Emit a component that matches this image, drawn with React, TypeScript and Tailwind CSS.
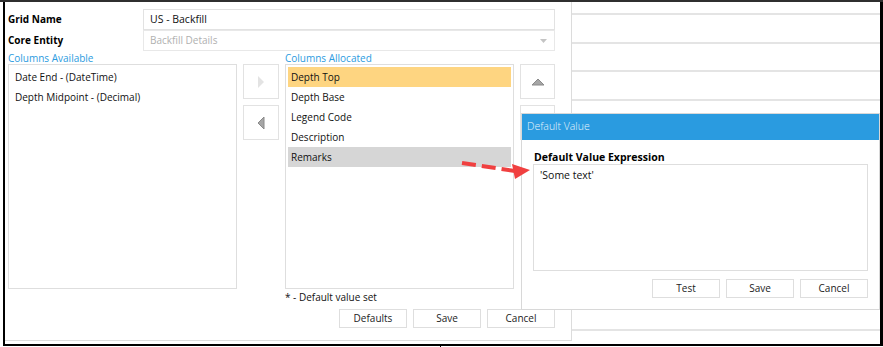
import React from 'react';

const font = "font-['Open_Sans',sans-serif]";

const leftItems = ['Date End - (DateTime)', 'Depth Midpoint - (Decimal)'];
const rightItems = [
  { label: 'Depth Top', tone: 'orange' },
  { label: 'Depth Base', tone: '' },
  { label: 'Legend Code', tone: '' },
  { label: 'Description', tone: '' },
  { label: 'Remarks', tone: 'gray' },
];

const FlatButton: React.FC<{ label: string }> = ({ label }) => (
  <div className="w-[68px] h-[19px] border border-[#dedede] bg-white flex items-center justify-center text-[10px] text-[#222]">
    {label}
  </div>
);

const ArrowBox: React.FC<{ children: React.ReactNode }> = ({ children }) => (
  <div className="w-full h-[35px] border border-[#e2e2e2] bg-white flex items-center justify-center">
    {children}
  </div>
);

export default function App() {
  return (
    <div className={`w-[883px] h-[347px] bg-white relative overflow-hidden ${font}`}>
      <div className="h-[2px] bg-[#2f2f2f]" />
      <div className="ml-[3px] w-[880px] h-[344px] border-l-2 border-r-[3px] border-b-2 border-black flex">
        {/* grid editor dialog */}
        <div className="w-[567px] h-[339px] shrink-0 border-r border-b border-[#dcdcdc] bg-white pl-[3px] pt-[7px]">
          <div className="w-[547px]">
            <div className="flex items-center h-[21px]">
              <div className="w-[135px] text-[10px] font-bold text-black">Grid Name</div>
              <div className="w-[412px] h-[21px] border border-[#e2e2e2] flex items-center px-[6px] text-[10.5px] text-[#111]">
                US - Backfill
              </div>
            </div>
            <div className="flex items-center h-[21px]">
              <div className="w-[135px] text-[10px] font-bold text-black">Core Entity</div>
              <div className="w-[412px] h-[21px] border border-[#e8e8e8] flex items-center justify-between px-[6px] text-[10px] text-[#b0b0b0]">
                <span>Backfill Details</span>
                <svg width="7" height="4" viewBox="0 0 7 4" className="mr-[1px]">
                  <path d="M0 0 L7 0 L3.5 4 Z" fill="#c4c4c4" />
                </svg>
              </div>
            </div>

            <div className="grid grid-cols-[229px_36px_229px_35px] gap-x-[6px]">
              <div className="h-[13px] leading-[14px] text-[10px] text-[#2b9be0]">Columns Available</div>
              <div />
              <div className="h-[13px] leading-[14px] text-[10px] text-[#2b9be0]">Columns Allocated</div>
              <div />

              <div className="h-[225px] border border-[#dedede] p-[2px]">
                {leftItems.map((t) => (
                  <div key={t} className="h-[20px] flex items-center pl-[4px] text-[10px] text-[#111]">
                    {t}
                  </div>
                ))}
              </div>

              <div className="flex flex-col gap-[6px]">
                <ArrowBox>
                  <svg width="8" height="14" viewBox="0 0 8 14">
                    <path d="M1 1 L7 7 L1 13 Z" fill="#e3e3e3" />
                  </svg>
                </ArrowBox>
                <ArrowBox>
                  <svg width="8" height="14" viewBox="0 0 8 14">
                    <path d="M7 1 L1 7 L7 13 Z" fill="#a6a6a6" stroke="#8a8a8a" strokeWidth="1" strokeLinejoin="round" />
                  </svg>
                </ArrowBox>
              </div>

              <div className="h-[225px] border border-[#dedede] p-[2px]">
                {rightItems.map((it) => (
                  <div
                    key={it.label}
                    className={`h-[20px] flex items-center pl-[3px] text-[10px] text-[#111] ${
                      it.tone === 'orange' ? 'bg-[#fed581]' : it.tone === 'gray' ? 'bg-[#d6d6d6]' : ''
                    }`}
                  >
                    {it.label}
                  </div>
                ))}
              </div>

              <div className="flex flex-col gap-[6px]">
                <ArrowBox>
                  <svg width="14" height="8" viewBox="0 0 14 8">
                    <path d="M1 7 L7 1 L13 7 Z" fill="#a6a6a6" stroke="#8a8a8a" strokeWidth="1" strokeLinejoin="round" />
                  </svg>
                </ArrowBox>
                <ArrowBox>
                  <svg width="14" height="8" viewBox="0 0 14 8">
                    <path d="M1 1 L7 7 L13 1 Z" fill="#a6a6a6" />
                  </svg>
                </ArrowBox>
              </div>
            </div>

            <div className="ml-[277px] h-[16px] leading-[16px] text-[10px] text-[#111]">* - Default value set</div>
            <div className="mt-[4px] flex justify-end gap-[6px]">
              <FlatButton label="Defaults" />
              <FlatButton label="Save" />
              <FlatButton label="Cancel" />
            </div>
          </div>
        </div>

        {/* background grid rows */}
        <div className="flex-1 flex flex-col">
          <div className="h-[13px] shrink-0 border-b-2 border-[#e4e4e4]" />
          {Array.from({ length: 11 }).map((_, i) => (
            <div key={i} className="h-[28.7px] shrink-0 border-b-2 border-[#e4e4e4]" />
          ))}
        </div>
      </div>

      {/* default value dialog */}
      <div className="absolute left-[521px] top-[113px] w-[359px] h-[197px] bg-white border border-[#d8d8d8]">
        <div className="h-[26px] bg-[#2a9be0] flex items-center pl-[5px] text-[10.5px] font-light text-[#e6f3fc]">
          Default Value
        </div>
        <div className="px-[11px]">
          <div className="mt-[11px] h-[13px] leading-[13px] pl-[1px] text-[10.5px] font-bold text-black">
            Default Value Expression
          </div>
          <div className="h-[107px] border border-[#dedede] px-[6px] pt-[3px] text-[10.5px] text-[#111]">
            'Some text'
          </div>
          <div className="mt-[8px] flex justify-end gap-[6px]">
            <FlatButton label="Test" />
            <FlatButton label="Save" />
            <FlatButton label="Cancel" />
          </div>
        </div>
      </div>

      {/* red annotation arrow */}
      <svg className="absolute left-[455px] top-[155px]" width="80" height="30" viewBox="0 0 80 30">
        <line x1="7" y1="8" x2="60" y2="16" stroke="#f04040" strokeWidth="4" strokeDasharray="14 6" />
        <path d="M57 9 L75 15 L60 24 Z" fill="#f04040" />
      </svg>

      <div className="absolute left-[440px] top-[345px] w-px h-[2px] bg-black" />
    </div>
  );
}
